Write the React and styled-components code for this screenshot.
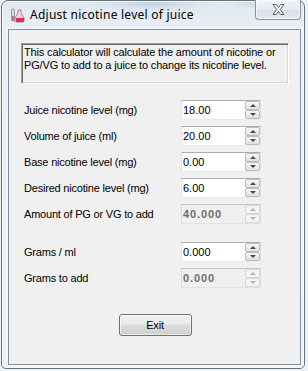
import React from 'react';
import styled, { createGlobalStyle } from 'styled-components';

const Global = createGlobalStyle`
  html, body { margin: 0; padding: 0; }
  body {
    background: #eef3f7;
    width: 308px;
    height: 371px;
    overflow: hidden;
    font-family: "Liberation Sans", Arial, sans-serif;
  }
`;

const Screen = styled.div`
  width: 308px;
  height: 371px;
  box-sizing: border-box;
  padding: 0 3px 2px 1px;
  display: flex;
`;

const Window = styled.div`
  flex: 1;
  display: flex;
  flex-direction: column;
  box-sizing: border-box;
  border: 1px solid #65717e;
  border-radius: 7px 7px 5px 5px;
  padding: 0 3px 3px 6px;
  background:
    radial-gradient(ellipse 60px 8px at 150px 2px, rgba(150, 185, 215, 0.45), transparent),
    radial-gradient(ellipse 40px 6px at 265px 2px, rgba(150, 185, 215, 0.4), transparent),
    linear-gradient(180deg, #dfe8f0 0%, #e9eff5 28px, #edf2f7 100%);
  box-shadow: inset 0 0 0 1px rgba(255, 255, 255, 0.75);
`;

const TitleBar = styled.div`
  height: 28px;
  display: flex;
  align-items: flex-start;
`;

const TitleGroup = styled.div`
  display: flex;
  align-items: center;
  gap: 4px;
  padding: 6px 0 0 2px;
  height: 16px;
`;

const Title = styled.span`
  font-family: "Noto Sans", "Open Sans", sans-serif;
  font-size: 12px;
  line-height: 16px;
  letter-spacing: 0.25px;
  color: #000;
  white-space: nowrap;
`;

const CloseButton = styled.div`
  margin-left: auto;
  margin-top: -1px;
  width: 46px;
  height: 20px;
  box-sizing: border-box;
  border: 1px solid #8593a3;
  border-top: none;
  border-radius: 0 0 4px 4px;
  background: linear-gradient(180deg, #f3f6fa 0%, #e3e9f0 50%, #d6dee7 51%, #e2e8ef 100%);
  box-shadow: inset 0 0 0 1px rgba(255, 255, 255, 0.7);
  display: flex;
  align-items: center;
  justify-content: center;
`;

const Client = styled.div`
  flex: 1;
  display: flex;
  flex-direction: column;
  background: #f0f0f0;
  border: 1px solid #858e98;
  box-shadow: 0 0 0 1px rgba(255, 255, 255, 0.6);
  padding: 13px 11px 0 12px;
`;

const InfoBox = styled.div`
  height: 41px;
  box-sizing: border-box;
  border-top: 1px solid #a0a0a0;
  border-left: 1px solid #a0a0a0;
  border-right: 1px solid #ffffff;
  border-bottom: 1px solid #ffffff;
  box-shadow: inset 1px 1px 0 #696969, inset -1px -1px 0 #d8d8d8;
  padding: 2px 0 0 2px;
  font-size: 11px;
  line-height: 13px;
  letter-spacing: -0.15px;
  color: #000;
  white-space: nowrap;
`;

const Rows = styled.div`
  display: flex;
  flex-direction: column;
  gap: 6px;
  margin-top: ${(p) => p.$top}px;
`;

const Row = styled.div`
  display: flex;
  align-items: center;
  height: 20px;
  padding-left: 3px;
`;

const Label = styled.span`
  width: 157px;
  font-size: 11px;
  letter-spacing: -0.2px;
  color: #000;
  white-space: nowrap;
`;

const Spin = styled.div`
  width: 80px;
  height: 20px;
  box-sizing: border-box;
  display: flex;
  border: 1px solid;
  border-color: ${(p) =>
    p.$disabled ? '#c4c6ca #d9dce0 #dfe2e6 #d9dce0' : '#abadb3 #dbdfe6 #e3e9ef #e2e3ea'};
  background: ${(p) => (p.$disabled ? '#f0f0f0' : '#ffffff')};
`;

const SpinText = styled.div`
  flex: 1;
  padding-left: 1px;
  font-size: 11px;
  line-height: 18px;
  font-weight: ${(p) => (p.$disabled ? 700 : 400)};
  letter-spacing: ${(p) => (p.$disabled ? '0.9px' : '0')};
  color: ${(p) => (p.$disabled ? '#6d6d6d' : '#000')};
`;

const Spinner = styled.div`
  width: 15px;
  display: flex;
  flex-direction: column;
`;

const SpinBtn = styled.div`
  flex: 1;
  box-sizing: border-box;
  border: 1px solid ${(p) => (p.$disabled ? '#d6d6d6' : '#bcbcbc')};
  border-radius: 2px;
  background: ${(p) =>
    p.$disabled
      ? '#f4f4f4'
      : 'linear-gradient(180deg, #f8f8f8 0%, #ececec 50%, #dfdfdf 100%)'};
  display: flex;
  align-items: center;
  justify-content: center;
`;

const Arrow = styled.span`
  width: 0;
  height: 0;
  border-left: 3px solid transparent;
  border-right: 3px solid transparent;
  ${(p) => (p.$dir === 'up' ? 'border-bottom' : 'border-top')}: 3px solid
    ${(p) => (p.$disabled ? '#b4b4b4' : '#4a4a4a')};
`;

const ExitButton = styled.button`
  align-self: center;
  margin-top: 26px;
  width: 73px;
  height: 22px;
  box-sizing: border-box;
  border: 1px solid #707070;
  border-radius: 3px;
  background: linear-gradient(180deg, #f2f2f2 0%, #ebebeb 45%, #dddddd 50%, #cfcfcf 100%);
  box-shadow: inset 0 0 0 1px rgba(255, 255, 255, 0.6);
  font-family: "Liberation Sans", Arial, sans-serif;
  font-size: 11px;
  letter-spacing: -0.2px;
  color: #000;
  padding: 0;
`;

const AppIcon = () => (
  <svg width="16" height="16" viewBox="0 0 16 16">
    <rect x="1.5" y="2" width="3" height="12" rx="1" fill="#d8d8dc" stroke="#8a8a92" strokeWidth="0.8" />
    <rect x="2.3" y="9" width="1.4" height="4.5" fill="#c23a5a" />
    <path d="M8 3 h3 v3 l3 5 v3 a1 1 0 0 1 -1 1 h-7 a1 1 0 0 1 -1 -1 v-3 l3 -5 z" fill="#f3d7df" stroke="#9b6a78" strokeWidth="0.8" />
    <path d="M6 11 h8 v3 a1 1 0 0 1 -1 1 h-6 a1 1 0 0 1 -1 -1 z" fill="#d0305a" />
  </svg>
);

const CloseGlyph = () => (
  <svg width="13" height="11" viewBox="0 0 13 11">
    <polygon
      points="1,0.5 4.2,0.5 6.5,3.4 8.8,0.5 12,0.5 8.3,5.5 12,10.5 8.8,10.5 6.5,7.6 4.2,10.5 1,10.5 4.7,5.5"
      fill="#ffffff"
      stroke="#535b67"
      strokeWidth="1"
      strokeLinejoin="round"
    />
  </svg>
);

const SpinBox = ({ value, disabled }) => (
  <Spin $disabled={disabled}>
    <SpinText $disabled={disabled}>{value}</SpinText>
    <Spinner>
      <SpinBtn $disabled={disabled}>
        <Arrow $dir="up" $disabled={disabled} />
      </SpinBtn>
      <SpinBtn $disabled={disabled}>
        <Arrow $dir="down" $disabled={disabled} />
      </SpinBtn>
    </Spinner>
  </Spin>
);

const FieldRow = ({ label, value, disabled }) => (
  <Row>
    <Label>{label}</Label>
    <SpinBox value={value} disabled={disabled} />
  </Row>
);

export default function App() {
  return (
    <>
      <Global />
      <Screen>
        <Window>
          <TitleBar>
            <TitleGroup>
              <AppIcon />
              <Title>Adjust nicotine level of juice</Title>
            </TitleGroup>
            <CloseButton>
              <CloseGlyph />
            </CloseButton>
          </TitleBar>
          <Client>
            <InfoBox>
              This calculator will calculate the amount of nicotine or
              <br />
              PG/VG to add to a juice to change its nicotine level.
            </InfoBox>
            <Rows $top={16}>
              <FieldRow label="Juice nicotine level (mg)" value="18.00" />
              <FieldRow label="Volume of juice (ml)" value="20.00" />
              <FieldRow label="Base nicotine level (mg)" value="0.00" />
              <FieldRow label="Desired nicotine level (mg)" value="6.00" />
              <FieldRow label="Amount of PG or VG to add" value="40.000" disabled />
            </Rows>
            <Rows $top={18}>
              <FieldRow label="Grams / ml" value="0.000" />
              <FieldRow label="Grams to add" value="0.000" disabled />
            </Rows>
            <ExitButton>Exit</ExitButton>
          </Client>
        </Window>
      </Screen>
    </>
  );
}
